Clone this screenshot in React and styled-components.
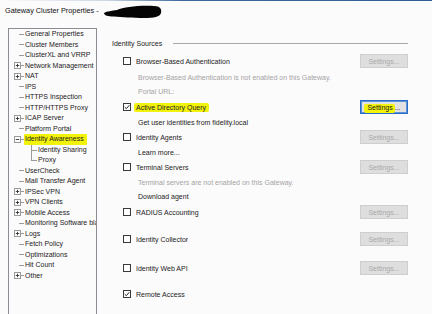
import React from "react";
import styled, { createGlobalStyle, css } from "styled-components";

const Global = createGlobalStyle`
  html, body { margin: 0; padding: 0; }
  body {
    background: #fcfbfc;
    font-family: "Liberation Sans", Arial, sans-serif;
    font-size: 7px;
    color: #1c1c1c;
    overflow: hidden;
  }
  #root { width: 432px; height: 314px; }
`;

const Window = styled.div`
  width: 432px;
  height: 314px;
  display: flex;
  flex-direction: column;
  overflow: hidden;
`;

const TopEdge = styled.div`
  flex: none;
  height: 1px;
  background: linear-gradient(to right, rgba(59,103,156,0) 0%, rgba(59,103,156,0.25) 25%, #3b679c 42%, #2f5e97 100%);
`;

const TitleBar = styled.div`
  flex: none;
  height: 27px;
  box-sizing: border-box;
  padding: 5px 0 0 5px;
  display: flex;
  align-items: flex-start;
  gap: 5px;
  font-size: 7.3px;
  line-height: 10px;
  color: #111;
`;

const Body = styled.div`
  flex: 1;
  min-height: 0;
  display: flex;
  padding-left: 8px;
  gap: 15px;
`;

const Tree = styled.div`
  flex: none;
  width: 89px;
  height: 300px;
  box-sizing: border-box;
  border: 1px solid #8a8d93;
  border-bottom: none;
  display: flex;
  flex-direction: column;
`;

const TreeRow = styled.div`
  height: 10.5px;
  display: flex;
  align-items: stretch;
  white-space: nowrap;
  overflow: hidden;
  line-height: 10.5px;
`;

const Gutter = styled.div`
  flex: none;
  width: ${(p) => (p.$level ? 29 : 16)}px;
  display: flex;
  align-items: center;
  justify-content: flex-end;
`;

const HLine = styled.div`
  width: ${(p) => p.$w}px;
  height: 1px;
  margin-right: 1px;
  background: #9a9a9a;
`;

const Elbow = styled.div`
  align-self: stretch;
  width: 6px;
  margin-right: 1px;
  background:
    linear-gradient(#9a9a9a, #9a9a9a) left top / 1px ${(p) => (p.$through ? "100%" : "50%")} no-repeat,
    linear-gradient(#9a9a9a, #9a9a9a) left 5px / 100% 1px no-repeat;
`;

const ExpBox = styled.svg`
  flex: none;
  width: 7px;
  height: 7px;
  display: block;
`;

const TreeLabel = styled.span`
  color: #1a1a1a;
  ${(p) =>
    p.$hl &&
    css`
      background: #f3f20a;
      padding: 0 3px 0 0;
      margin-left: -1px;
      padding-left: 1px;
      border-radius: 1px;
    `}
`;

const Panel = styled.div`
  flex: none;
  width: 296px;
  display: flex;
  flex-direction: column;
`;

const Header = styled.div`
  margin-top: 10px;
  height: 10px;
  display: flex;
  align-items: center;
  gap: 11px;
  color: #222;
`;

const Rule = styled.div`
  flex: 1;
  height: 1px;
  background: #a9a9a9;
`;

const Row = styled.div`
  flex: none;
  height: 14px;
  margin-top: ${(p) => p.$mt}px;
  padding-left: ${(p) => (p.$note ? 26 : 11)}px;
  display: flex;
  align-items: center;
  white-space: nowrap;
  color: ${(p) => (p.$muted ? "#a3a3a3" : "#222")};
`;

const Check = styled.span`
  flex: none;
  width: 8px;
  height: 8px;
  box-sizing: border-box;
  border: 1px solid #3a3a3a;
  background: #fff;
  margin-right: 5px;
  display: flex;
  align-items: center;
  justify-content: center;
`;

const Label = styled.span`
  ${(p) =>
    p.$hl &&
    css`
      background: #f3f20a;
      padding: 1px 3px 1px 2px;
      margin-left: -2px;
      border-radius: 2px;
    `}
`;

const Button = styled.div`
  flex: none;
  margin-left: auto;
  width: 48px;
  height: 14px;
  box-sizing: border-box;
  display: flex;
  align-items: center;
  justify-content: center;
  font-size: 7px;
  ${(p) =>
    p.$active
      ? css`
          border: 1px solid #2b6cc4;
          box-shadow: inset 0 0 0 1px #5c93d8;
          background: #e2e2e2;
          color: #1a1a1a;
        `
      : css`
          border: 1px solid #cfcfcf;
          background: #dedede;
          color: #a9a9a9;
        `}
`;

const BtnHl = styled.span`
  background: #f3f20a;
  padding: 0 2px 2px 3px;
  margin-left: -3px;
  border-radius: 2px;
`;

function Expander({ open }) {
  return (
    <ExpBox viewBox="0 0 7 7">
      <rect x="0.5" y="0.5" width="6" height="6" fill="#fff" stroke="#9a9a9a" strokeWidth="1" />
      <line x1="1.8" y1="3.5" x2="5.2" y2="3.5" stroke="#333" strokeWidth="0.9" />
      {!open && <line x1="3.5" y1="1.8" x2="3.5" y2="5.2" stroke="#333" strokeWidth="0.9" />}
    </ExpBox>
  );
}

function CheckMark() {
  return (
    <svg width="6" height="6" viewBox="0 0 6 6">
      <path d="M0.7 3.1 L2.3 4.7 L5.3 1.2" fill="none" stroke="#222" strokeWidth="1" />
    </svg>
  );
}

const treeItems = [
  { t: "General Properties" },
  { t: "Cluster Members" },
  { t: "ClusterXL and VRRP" },
  { t: "Network Management", exp: true },
  { t: "NAT", exp: true },
  { t: "IPS" },
  { t: "HTTPS Inspection" },
  { t: "HTTP/HTTPS Proxy" },
  { t: "ICAP Server", exp: true },
  { t: "Platform Portal" },
  { t: "Identity Awareness", exp: true, open: true, hl: true },
  { t: "Identity Sharing", level: 1, through: true },
  { t: "Proxy", level: 1 },
  { t: "UserCheck" },
  { t: "Mail Transfer Agent" },
  { t: "IPSec VPN", exp: true },
  { t: "VPN Clients", exp: true },
  { t: "Mobile Access", exp: true },
  { t: "Monitoring Software blade" },
  { t: "Logs", exp: true },
  { t: "Fetch Policy" },
  { t: "Optimizations" },
  { t: "Hit Count" },
  { t: "Other", exp: true },
];

const rows = [
  { mt: 6, check: false, label: "Browser-Based Authentication", btn: "disabled" },
  { mt: 2, note: true, muted: true, label: "Browser-Based Authentication is not enabled on this Gateway." },
  { mt: 0, note: true, muted: true, label: "Portal URL:" },
  { mt: 2, check: true, label: "Active Directory Query", hl: true, btn: "active" },
  { mt: 1, note: true, label: "Get user identities from fidelity.local" },
  { mt: 1, check: false, label: "Identity Agents", btn: "disabled" },
  { mt: 1, note: true, label: "Learn more..." },
  { mt: 1, check: false, label: "Terminal Servers", btn: "disabled" },
  { mt: 1, note: true, muted: true, label: "Terminal servers are not enabled on this Gateway." },
  { mt: 0, note: true, label: "Download agent" },
  { mt: 2, check: false, label: "RADIUS Accounting", btn: "disabled" },
  { mt: 13, check: false, label: "Identity Collector", btn: "disabled" },
  { mt: 15, check: false, label: "Identity Web API", btn: "disabled" },
  { mt: 12, check: true, label: "Remote Access" },
];

export default function App() {
  return (
    <>
      <Global />
      <Window>
        <TopEdge />
        <TitleBar>
          <span>Gateway Cluster Properties -</span>
          <svg width="58" height="15" viewBox="0 0 58 15" style={{ marginTop: -2 }}>
            <path
              d="M0 9 C3 7 8 7 13 6 C20 3 36 1 50 2 C56 2 58 5 57 9 C56 13 50 14 40 14 C29 14 18 13 10 12.5 C4 12.5 0 11.5 0 9 Z"
              fill="#050505"
            />
          </svg>
        </TitleBar>
        <Body>
          <Tree>
            {treeItems.map((it) => (
              <TreeRow key={it.t}>
                <Gutter $level={it.level}>
                  {it.level ? (
                    <Elbow $through={it.through} />
                  ) : it.exp ? (
                    <>
                      <Expander open={it.open} />
                      <HLine $w={3} />
                    </>
                  ) : (
                    <HLine $w={5} />
                  )}
                </Gutter>
                <TreeLabel $hl={it.hl}>{it.t}</TreeLabel>
              </TreeRow>
            ))}
          </Tree>
          <Panel>
            <Header>
              <span>Identity Sources</span>
              <Rule />
            </Header>
            {rows.map((r) => (
              <Row key={r.label} $mt={r.mt} $note={r.note} $muted={r.muted}>
                {!r.note && <Check>{r.check && <CheckMark />}</Check>}
                <Label $hl={r.hl}>{r.label}</Label>
                {r.btn && (
                  <Button $active={r.btn === "active"}>
                    {r.btn === "active" ? (
                      <span>
                        <BtnHl>Settings</BtnHl>...
                      </span>
                    ) : (
                      "Settings..."
                    )}
                  </Button>
                )}
              </Row>
            ))}
          </Panel>
        </Body>
      </Window>
    </>
  );
}
